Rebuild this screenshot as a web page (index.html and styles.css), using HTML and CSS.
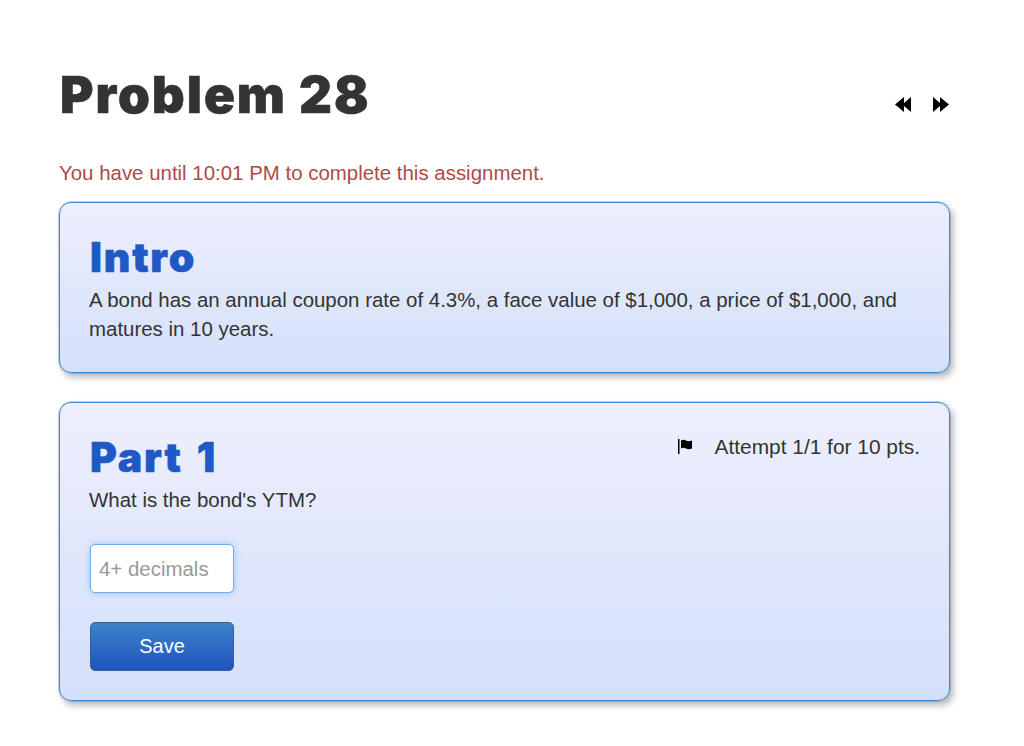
FILE: index.html
```html
<!DOCTYPE html>
<html>
<head>
  <meta charset="utf-8"/>
  <title>Problem 28</title>
  <link rel="stylesheet" href="styles.css">
</head>
<body>
  <div class="page">
    <div class="title-row">
      <h1>Problem 28</h1>
      <div class="nav-arrows">
        <svg class="arrow" viewBox="0 0 16 15" aria-hidden="true"><path d="M16 0v15L9 9v6L0 7.500 9 0v6z"/></svg>
        <svg class="arrow" viewBox="0 0 16 15" aria-hidden="true"><path d="M0 0v15l7-6v6l9-7.500L7 0v6z"/></svg>
      </div>
    </div>

    <p class="deadline">You have until 10:01 PM to complete this assignment.</p>

    <div class="card">
      <h2>Intro</h2>
      <p>A bond has an annual coupon rate of 4.3%, a face value of $1,000, a price of $1,000, and matures in 10 years.</p>
    </div>

    <div class="card">
      <div class="attempt">
        <svg class="flag" viewBox="0 0 15 15" aria-hidden="true"><path d="M0 0h1.500v15H0zM3 1.500c2-1 3.500-1 5 0s3.500 1 6 0v8c-2.500 1-4 1-6 0s-3-1-5 0z"/></svg>
        <span>Attempt 1/1 for 10 pts.</span>
      </div>
      <h2>Part 1</h2>
      <p>What is the bond's YTM?</p>
      <input class="answer" type="text" placeholder="4+ decimals"/>
      <button class="save">Save</button>
    </div>
  </div>
</body>
</html>
```

FILE: styles.css
```css
body {
  margin: 0;
  background-color: #fff;
  color: #333;
  font-family: "Liberation Sans", Arial, sans-serif;
  font-size: 20.45px;
  line-height: 29px;
}
.page {
  padding: 64px 74px 0 59px;
}
.title-row {
  display: flex;
  justify-content: space-between;
  align-items: flex-end;
  height: 64px;
}
h1 {
  margin: 0 0 2px 1px;
  font-family: Inter, "Liberation Sans", sans-serif;
  font-size: 51px;
  line-height: 62px;
  font-weight: 900;
  letter-spacing: 2px;
  -webkit-text-stroke: 0.6px #333;
}
.nav-arrows {
  display: flex;
  gap: 22px;
  padding-bottom: 16px;
  padding-right: 1px;
}
.arrow {
  display: block;
  width: 16px;
  height: 15px;
  fill: #000;
}
.deadline {
  margin: 30px 0 15px;
  color: #b04a48;
}
.card {
  position: relative;
  padding: 28px 29px 29px;
  margin-bottom: 29px;
  background-image: linear-gradient(to bottom, #eeeffd, #d3e0fa);
  border: 1px solid #3f87cf;
  border-radius: 12px;
  box-shadow: 0 0 0 0.5px rgba(63, 135, 207, 0.6), 3px 4px 7px rgba(0, 0, 0, 0.3);
}
h2 {
  margin: 0 0 2px 1px;
  font-family: Inter, "Liberation Sans", sans-serif;
  font-size: 41px;
  line-height: 52px;
  font-weight: 900;
  letter-spacing: 1.8px;
  word-spacing: 4px;
  color: #2058c6;
  -webkit-text-stroke: 0.5px #2058c6;
}
.card p {
  margin: 0;
}
.attempt {
  position: absolute;
  top: 29px;
  right: 29px;
  display: flex;
  align-items: center;
  gap: 21px;
  font-size: 20.9px;
}
.flag {
  width: 15px;
  height: 15px;
  fill: #000;
}
.answer {
  display: block;
  box-sizing: border-box;
  width: 144px;
  height: 49px;
  margin: 30px 0 0 1px;
  padding: 0 8px;
  border: 1px solid #6fabe8;
  border-radius: 5px;
  background-color: #fff;
  box-shadow: 0 0 6px rgba(82, 168, 236, 0.5);
  font-family: inherit;
  font-size: 20.45px;
}
.answer::placeholder {
  color: #999;
  opacity: 1;
}
.save {
  display: block;
  width: 144px;
  height: 49px;
  margin: 29px 0 0 1px;
  background-image: linear-gradient(to bottom, #3c84c8, #1f52bf);
  border: 1px solid #3a5f8f;
  border-radius: 5px;
  color: #fff;
  font-family: inherit;
  font-size: 20px;
}
```
